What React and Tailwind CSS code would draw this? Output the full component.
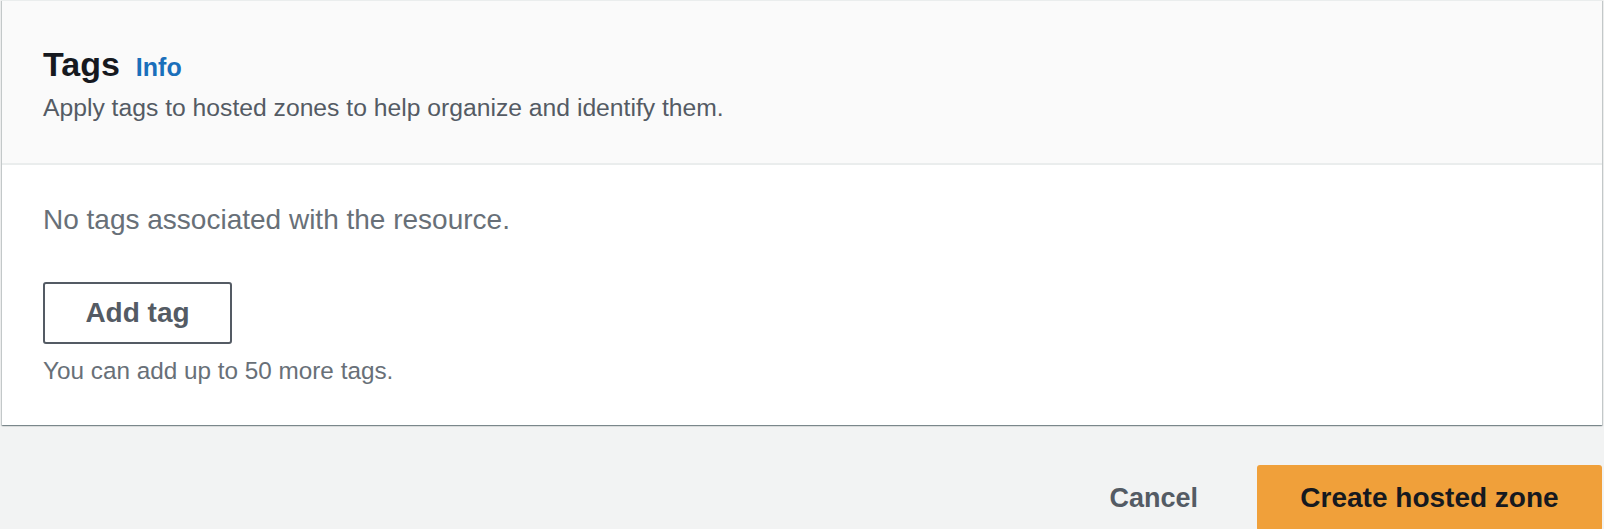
const font = { fontFamily: '"Liberation Sans", Arial, sans-serif' };

const TagsPanel = () => {
  return (
    <div
      className="mx-[2px] border-t border-[#eaeded] bg-white shadow-[0_1px_1px_0_rgba(0,28,36,0.3),1px_1px_1px_0_rgba(0,28,36,0.15),-1px_1px_1px_0_rgba(0,28,36,0.15)]"
    >
      <div className="border-b-2 border-[#eaeded] bg-[#fafafa] pl-[41px] pr-10 pt-[43px] pb-[40px]">
        <div className="flex items-baseline h-[40px] leading-[40px]">
          <h2 className="text-[34px] font-bold text-[#16191f]">Tags</h2>
          <a href="#" className="ml-[16px] text-[25px] font-bold text-[#1a6fbb]">
            Info
          </a>
        </div>
        <p className="mt-[9px] text-[24.7px] leading-[30px] text-[#545b64]">
          Apply tags to hosted zones to help organize and identify them.
        </p>
      </div>
      <div className="pl-[41px] pr-10 pt-[38px] pb-[39px]">
        <p className="text-[28px] leading-[34px] text-[#687078]">No tags associated with the resource.</p>
        <button
          type="button"
          className="mt-[45px] flex h-[62px] w-[189px] items-center justify-center rounded-[3px] border-2 border-[#545b64] bg-white text-[28px] font-bold text-[#545b64]"
        >
          Add tag
        </button>
        <p className="mt-[12px] text-[24.3px] leading-[30px] text-[#687078]">You can add up to 50 more tags.</p>
      </div>
    </div>
  );
};

const App = () => {
  return (
    <div className="min-h-screen bg-[#f2f3f3]" style={font}>
      <TagsPanel />
      <div className="mt-[40px] flex items-center justify-end pr-[2px]">
        <button type="button" className="mr-[59px] text-[27px] font-bold text-[#545b64]">
          Cancel
        </button>
        <button
          type="button"
          className="flex h-[66px] w-[345px] items-center justify-center rounded-[3px] bg-[#f0a03a] text-[28px] font-bold text-[#16191f]"
        >
          Create hosted zone
        </button>
      </div>
    </div>
  );
};

export default App;
